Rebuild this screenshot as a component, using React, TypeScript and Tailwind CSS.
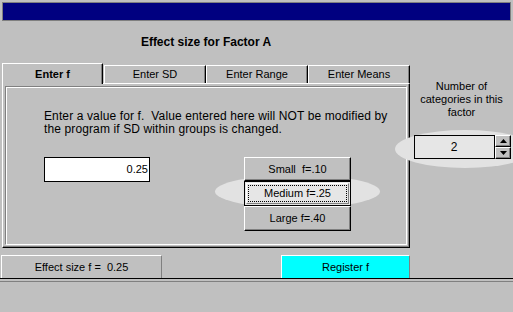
import React from 'react';

function Tab({ label, active }: { label: string; active?: boolean }) {
  if (active) {
    return (
      <div className="relative z-10 -mb-[1px] w-[101px] h-[21px] bg-[#c0c0c0] border-l border-t border-r border-l-white border-t-white border-r-black shadow-[inset_-1px_0_#808080] flex items-center justify-center font-bold">
        {label}
      </div>
    );
  }
  return (
    <div className="w-[102px] h-[18px] border-l border-t border-r border-l-white border-t-white border-r-black shadow-[inset_-1px_0_#808080] flex items-center justify-center">
      {label}
    </div>
  );
}

export default function App() {
  return (
    <div className="w-[513px] h-[312px] bg-[#c0c0c0] overflow-hidden font-['Liberation_Sans',Arial,sans-serif] text-[11px] leading-[13px] text-black flex flex-col">
      {/* title bar */}
      <div className="mt-[2px] ml-[2px] w-[509px] h-[19px] border border-[#808080] bg-[#000080]" />

      <div className="flex">
        {/* left: tabs + panel */}
        <div className="ml-[2px] w-[408px] flex flex-col">
          <div className="h-[42px] pt-[1px] flex items-center justify-center font-bold text-[12px]">
            Effect size for Factor A
          </div>

          <div className="flex items-end h-[20px]">
            <Tab label="Enter f" active />
            <div className="ml-[1px] flex">
              <Tab label="Enter SD" />
              <Tab label="Enter Range" />
              <Tab label="Enter Means" />
            </div>
          </div>

          <div className="relative h-[165px] p-[2px] border border-t-white border-l-white border-r-black border-b-black shadow-[inset_-1px_-1px_#808080]">
            <div className="h-full border border-t-[#808080] border-l-[#808080] border-b-white border-r-white shadow-[inset_1px_1px_white] pt-[23px] pl-[38px]">
              <p className="text-[12px] tracking-[0.12px]">
                Enter a value for f.&nbsp; Value entered here will NOT be modified by
                <br />
                the program if SD within groups is changed.
              </p>

              <div className="mt-[21px] flex items-start">
                <div className="w-[106px] h-[25px] border border-black bg-white flex items-center justify-end pr-[1px]">
                  0.25
                </div>

                <div className="relative ml-[94px] w-[107px] flex flex-col">
                  <div className="absolute left-[-29px] top-[18px] w-[165px] h-[33px] rounded-[50%] bg-[#e2e2e2]" />
                  <button className="relative h-[24px] border border-t-white border-l-white border-r-black border-b-black shadow-[inset_-1px_-1px_#808080] bg-[#c0c0c0] flex items-center justify-center whitespace-pre">
                    Small  f=.10
                  </button>
                  <button className="relative h-[25px] border border-black bg-[#e6e6e6] p-[1px]">
                    <div className="h-full border border-t-white border-l-white border-r-[#808080] border-b-[#808080] p-[1px]">
                      <div className="h-full border border-dotted border-black flex items-center justify-center">
                        Medium f=.25
                      </div>
                    </div>
                  </button>
                  <button className="relative h-[25px] border border-t-white border-l-white border-r-black border-b-black shadow-[inset_-1px_-1px_#808080] bg-[#c0c0c0] flex items-center justify-center">
                    Large f=.40
                  </button>
                </div>
              </div>
            </div>
          </div>
        </div>

        {/* right: number of categories */}
        <div className="w-[103px] pt-[59px] flex flex-col">
          <div className="text-center">
            Number of
            <br />
            categories in this
            <br />
            factor
          </div>
          <div className="relative mt-[16px] ml-[4px] flex">
            <div className="absolute left-[-19px] top-[-5px] w-[140px] h-[38px] rounded-[50%] bg-[#e2e2e2]" />
            <div className="relative w-[81px] h-[24px] border border-black bg-[#e6e6e6] flex items-center justify-center pr-[1px] text-[12px]">
              2
            </div>
            <div className="relative flex flex-col w-[16px] h-[24px]">
              <div className="h-[12px] bg-[#c0c0c0] border border-t-white border-l-white border-r-black border-b-black shadow-[inset_-1px_-1px_#808080] flex items-center justify-center">
                <svg width="7" height="4" viewBox="0 0 7 4"><path d="M3.5 0 L7 4 L0 4 Z" fill="black" /></svg>
              </div>
              <div className="h-[12px] bg-[#c0c0c0] border border-t-white border-l-white border-r-black border-b-black shadow-[inset_-1px_-1px_#808080] flex items-center justify-center">
                <svg width="7" height="4" viewBox="0 0 7 4"><path d="M0 0 L7 0 L3.5 4 Z" fill="black" /></svg>
              </div>
            </div>
          </div>
        </div>
      </div>

      {/* bottom strip */}
      <div className="mt-[7px] h-[24px] border-b border-black flex">
        <div className="ml-[1px] w-[161px] h-full border-l border-t border-r border-l-white border-t-white border-r-[#808080] flex items-center justify-center whitespace-pre">
          Effect size f =  0.25
        </div>
        <div className="ml-[119px] w-[129px] h-full bg-[#00ffff] border-l border-t border-r border-l-white border-t-white border-r-[#808080] flex items-center justify-center">
          Register f
        </div>
      </div>
      <div className="mt-[2px] h-[1px] bg-[#808080]" />
    </div>
  );
}
